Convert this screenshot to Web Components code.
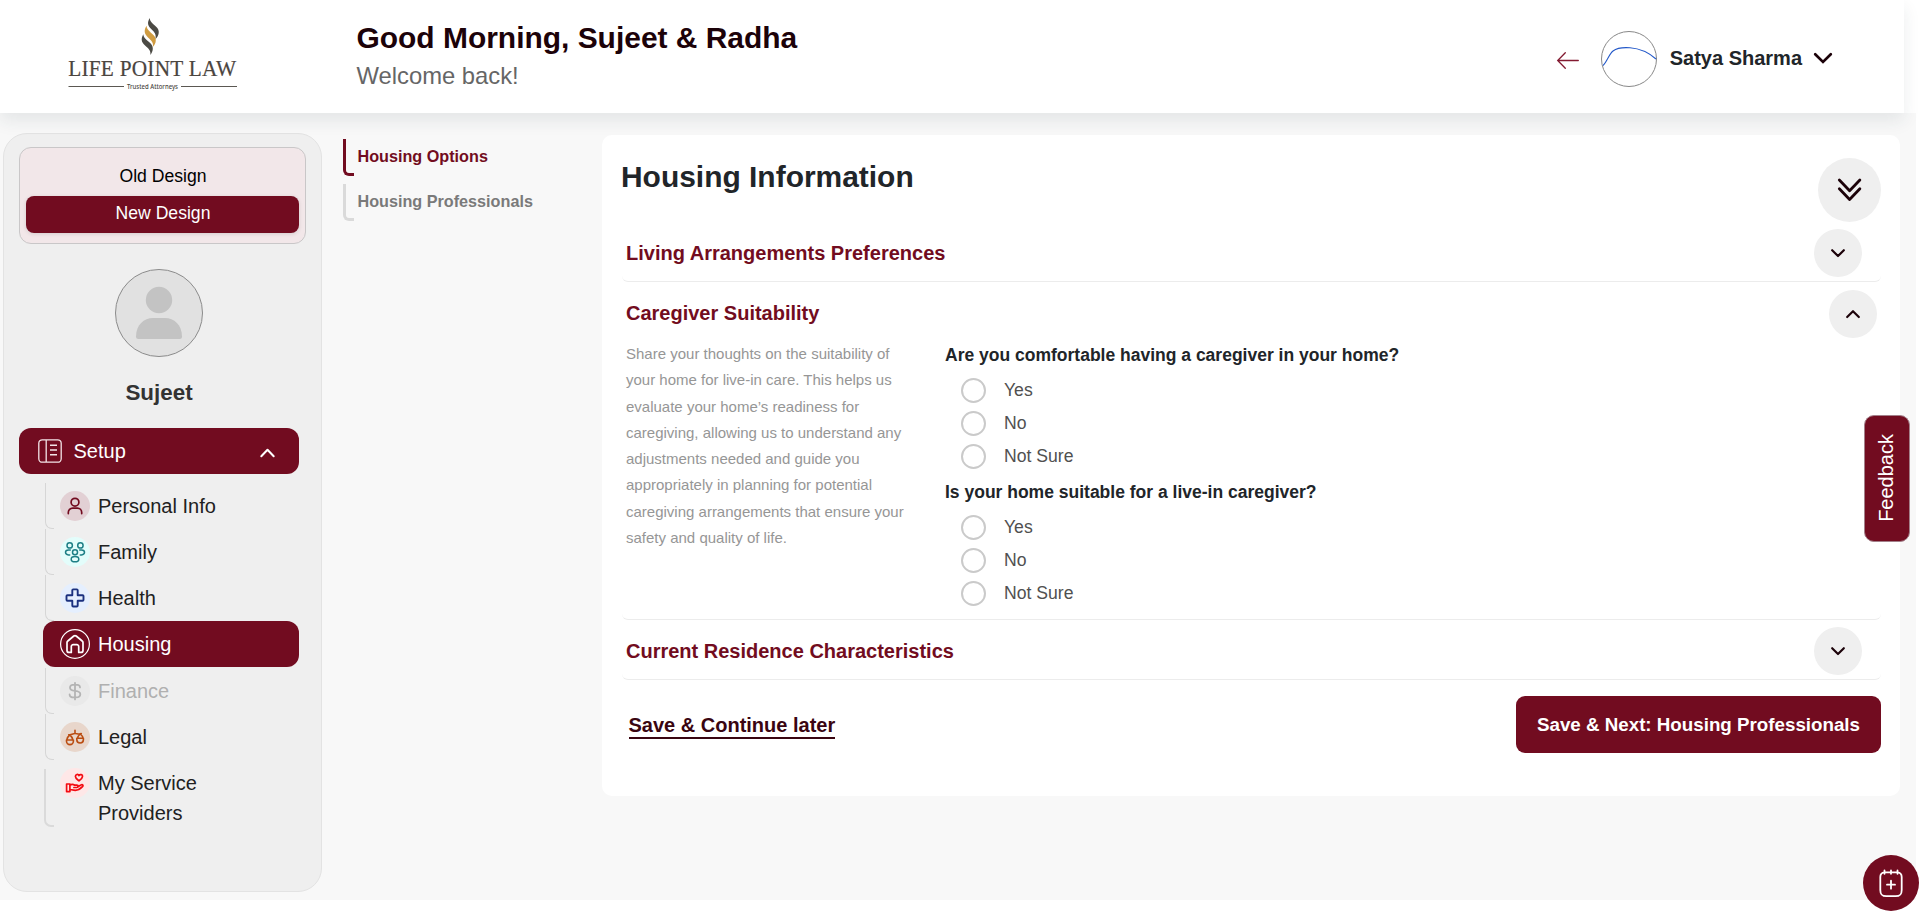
<!DOCTYPE html>
<html lang="en">
<head>
<meta charset="utf-8">
<title>Housing Information</title>
<style>
  html, body { margin: 0; background: #fff; }
  body { font-family: "Liberation Sans", Arial, sans-serif; color: #212529; height: 912px; overflow: hidden; }
</style>
</head>
<body>
<app-shell></app-shell>
<script>
const define = (name, markup) => customElements.define(name, class extends HTMLElement {
  constructor() {
    super();
    const t = document.createElement('template');
    t.innerHTML = typeof markup === 'function' ? markup(this) : markup;
    this.attachShadow({ mode: 'open' }).appendChild(t.content.cloneNode(true));
  }
});

const icons = {
  person: `<g stroke="#720c20" stroke-width="1.7"><circle cx="15" cy="11.2" r="3.9"/><path d="M8.3 22.6v-1.100a4.300 4.300 0 0 1 4.300-4.300h4.800a4.300 4.300 0 0 1 4.300 4.300v1.100"/></g>`,
  family: `<g stroke="#1d7f86" stroke-width="1.5"><circle cx="9.7" cy="8.4" r="2.7"/><circle cx="20.4" cy="8.4" r="2.7"/><circle cx="15" cy="15.2" r="2.5"/><ellipse cx="15" cy="22.2" rx="3.8" ry="2.6"/><path d="M10.300 12.900H8.500c-4 0-4 4.600 0 5h1.200M19.700 12.900h1.800c4 0 4 4.600 0 5h-1.200"/></g>`,
  health: `<path stroke="#1b317f" stroke-width="1.9" d="M12.3 7.3q0-.9.9-.9h3.6q.9 0 .9.9v4.9h4.900q.9 0 .9.9v3.700q0 .9-.9.9h-4.900v4.900q0 .9-.9.9h-3.600q-.9 0-.9-.9v-4.900H7.400q-.9 0-.9-.9v-3.700q0-.9.9-.9h4.900z"/>`,
  house: `<g stroke="#fff"><circle cx="15" cy="15" r="14.4" stroke-width="1.2"/><path stroke-width="1.7" d="M11.300 23.400H9a2 2 0 0 1-2-2v-7.800a2 2 0 0 1 .8-1.600l6-5a1.900 1.900 0 0 1 2.400 0l6 5a2 2 0 0 1 .8 1.600v7.800a2 2 0 0 1-2 2h-2.300v-5.900a1.800 1.800 0 0 0-1.800-1.800h-3.800a1.800 1.800 0 0 0-1.800 1.800z"/></g>`,
  dollar: `<path stroke="#b4b4b4" stroke-width="1.8" d="M15 6.8v16.600M20 11.400c0-1.600-1.900-2.700-4.200-2.700h-1.500c-2.400 0-4.300 1-4.300 3s1.700 2.800 5 3.200c3.500.4 5.300 1.300 5.300 3.300s-2 3.200-4.400 3.200h-1.700c-2.500 0-4.600-1-4.600-3"/>`,
  scales: `<g stroke="#ba4d12" stroke-width="1.6"><path d="M15 8.300v3.200M8.700 12.900c2.300-.1 4.300-1.400 6.300-1.400s4 1.100 6.300 0M9.800 12.900q-2.300 2-2.900 4.500M9.800 12.900q2.200 2 3 4.500M20.300 12q-2.300 1.900-2.900 4.200M20.300 12q2.300 1.900 2.800 4.200M6.500 18h6.900v1.300a3.450 3.300 0 0 1-6.900 0zM16.800 16.300h6.600v1.500a3.300 3.200 0 0 1-6.600 0z"/></g>`,
  care: `<g stroke="#f30b12" stroke-width="1.7"><path d="M19 12.800c-2-1.500-3.600-2.400-3.600-4.200 0-2.400 2.700-2.900 3.600-1 1-1.700 3.900-1.200 3.500 1-.2 1.800-1.600 2.900-3.500 4.200z"/><path d="M6.600 16h3.300v7.600H6.600zM9.900 17.200c1.700-1.200 3.500-.9 4.800 0h2.200c1.600 0 1.600 2.300 0 2.300h-3M17.800 18.700l3.200-1.800c1.600-.8 2.700.7 1.500 1.800-2.200 2.200-4.300 3.600-7.200 3.600l-5.400-.8"/></g>`
};
const chev = (w, sw, d) => `<svg width="${w}" height="${w}" viewBox="0 0 24 24" fill="none" stroke="#1c0209" stroke-width="${sw}" stroke-linecap="round" stroke-linejoin="round">${d}</svg>`;

define('brand-logo', `
<style>:host{display:block;width:210px;height:84px}svg{display:block;overflow:visible}</style>
<svg width="210" height="84" viewBox="47 12 210 84">
  <path fill="#4b4a44" d="M149.700 18c-2.700 4.500-2 7.700 1.500 11 3.500 3.200 5.300 5.500 4.200 10.300 4-4 4.600-8.800 1-12.300-3.400-3.300-6.300-4.800-6.700-9z"/>
  <path fill="#d09c41" d="M146.500 25.800c-2.800 4.600-2.200 8 1.300 11.400 3.800 3.600 6 5.600 5 9.900 3.700-4 4.100-8.600.6-12.100-3.500-3.500-6.500-5-6.900-9.200z"/>
  <path fill="#4b4a44" d="M143.300 34.200c-2.600 4.800-1.900 7.800 1.500 11 3.600 3.300 6.300 5.300 5.500 9.800 3.400-4.500 3.300-8.600.1-11.800-3.500-3.400-6.700-4.800-7.100-9z"/>
  <text transform="translate(68.200 75.900) scale(.888 1)" font-family="Liberation Serif, serif" font-size="24" fill="#4b453f" textLength="189" stroke="#4b453f" stroke-width=".2">LIFE POINT LAW</text>
  <path d="M68.500 86.500H124M181 86.500h56" stroke="#5b5852" stroke-width="1"/>
  <text x="127" y="88.500" font-family="Noto Sans, sans-serif" font-size="6.200" font-weight="500" fill="#4b4843" textLength="51" lengthAdjust="spacingAndGlyphs">Trusted Attorneys</text>
</svg>`);

define('app-header', `
<style>
:host{display:flex;position:relative;width:1904px;height:113px;box-sizing:border-box;background:#fff;box-shadow:0 8px 16px rgba(33,51,61,.09);align-items:flex-start}
brand-logo{margin:12px 0 0 47px}
.greet{margin:20px 0 0 99.500px;flex:1}
h1{margin:0;font-size:29.950px;line-height:36px;color:#1c0209}
p{margin:1px 0 0;font-size:23.800px;line-height:37px;color:#666}
.user{display:flex;align-items:center;height:56px;margin:31px 71px 0 0}
.arrow{margin-right:21px;margin-top:1px}
.name{font-size:20px;font-weight:700;line-height:24px;margin:-3px 11px 0 13px}
</style>
<brand-logo></brand-logo>
<div class="greet"><h1>Good Morning, Sujeet &amp; Radha</h1><p>Welcome back!</p></div>
<div class="user">
  <svg class="arrow" width="24" height="20" viewBox="0 0 24 20" fill="none" stroke="#831a31" stroke-width="1.300" stroke-linecap="round"><path d="M1.700 10.500H22.300M9.300 2.700L1.700 10.500l7.600 7.800"/></svg>
  <svg width="56" height="56" viewBox="0 0 56 56" fill="none"><circle cx="28" cy="28" r="27.500" stroke="#888"/><path stroke="#2459c9" stroke-width="1.100" d="M2 34.500C6 31 8 23 12 20c4-3 12-3.600 17-3.200 9 .7 19 5 26 11.200"/></svg>
  <div class="name">Satya Sharma</div>
  <svg width="20" height="14" viewBox="0 0 20 14" fill="none" stroke="#1c0209" stroke-width="2.700" stroke-linecap="round"><path d="M2.200 2.300L10 9.900l7.800-7.600"/></svg>
</div>`);

define('design-switch', `
<style>
:host{display:flex;flex-direction:column;box-sizing:border-box;width:287px;height:97px;border:1px solid #c9c7c8;border-radius:12px;background:#f2e7e9;padding:10px 6px 9px;font-size:17.600px;text-align:center;color:#000}
div{height:37px;line-height:36px;border-radius:8px;padding-left:1px}
.on{background:#720c20;color:#fff;margin-top:1px;line-height:34px;box-shadow:0 1px 4px rgba(0,0,0,.12)}
</style><div>Old Design</div><div class="on">New Design</div>`);

define('profile-badge', `
<style>:host{display:flex;flex-direction:column;align-items:center;width:280px}
div{font-size:22.400px;font-weight:700;color:#333;line-height:28px;margin-top:22px}</style>
<svg width="88" height="88" viewBox="0 0 88 88"><circle cx="44" cy="44" r="43.500" fill="#e1e1e1" stroke="#8b8b8b"/><circle cx="44" cy="31" r="13.200" fill="#c3c3c3"/><path fill="#c3c3c3" d="M21 67.500C21 56 29 49 38 49h12c9 0 17 7 17 18.500q0 2.500-2.500 2.500h-41Q21 70 21 67.500z"/></svg>
<div><slot></slot></div>`);

define('menu-head', `
<style>:host{display:flex;align-items:center;box-sizing:border-box;width:280px;height:46px;border-radius:12px;background:#720c20;color:#fff;font-size:20px;padding:0 23px 0 19px}
span{flex:1;margin-left:11.500px}.c{margin-top:4px}</style>
<svg width="24" height="24" viewBox="0 0 24 24" fill="none" stroke="#f3e4e7" stroke-width="1.300"><rect x=".8" y=".8" width="22.400" height="22.400" rx="3.500"/><path d="M8.200 1v22"/><path stroke-width="1.500" d="M12 6.300h7M12 11h7M12 15.800h7"/></svg>
<span><slot></slot></span>
<svg class="c" width="17" height="12" viewBox="0 0 17 12" fill="none" stroke="#fff" stroke-width="2" stroke-linecap="round" stroke-linejoin="round"><path d="M2.300 9.300l6.200-6.600 6.200 6.600"/></svg>`);

define('menu-item', el => `
<style>
:host{display:flex;position:relative;box-sizing:border-box;width:256px;height:46px;padding:8px 0 0 17px;font-size:20px;line-height:30px;color:#212121}
:host::before{content:"";position:absolute;left:2px;top:0;width:8px;height:45px;border:solid #d6d6d6;border-width:0 0 1.500px 1.500px;border-bottom-left-radius:7px}
:host([active]){background:#720c20;color:#fff;border-radius:12px}
:host([active])::before{display:none}
:host([disabled]){color:#b0b0b0}
:host([tall]){height:80px}
:host([tall])::before{left:1px;top:9px;height:56px;border-color:#dadada;border-width:0 0 2px 2px}
i{flex:none;width:30px;height:30px;border-radius:50%;background:${el.getAttribute('tint')}}
span{margin-left:8px;max-width:130px}
svg{display:block}
</style>
<i><svg width="30" height="30" viewBox="0 0 30 30" fill="none" stroke-linecap="round" stroke-linejoin="round">${icons[el.getAttribute('icon')]}</svg></i><span><slot></slot></span>`);

define('side-bar', `
<style>
:host{display:flex;flex-direction:column;box-sizing:border-box;width:319px;height:759px;border:1px solid #e3e3e3;border-radius:24px;background:#efefef;padding:13px 15px 0}
profile-badge{margin:25px 0 21px}
nav{display:flex;flex-direction:column;padding:9px 0 0 24px}
.late{margin-top:.7px}
</style>
<design-switch></design-switch>
<profile-badge>Sujeet</profile-badge>
<menu-head>Setup</menu-head>
<nav>
<menu-item icon="person" tint="#e2d0d4">Personal Info</menu-item>
<menu-item icon="family" tint="#e3fdfb">Family</menu-item>
<menu-item icon="health" tint="#e5effe">Health</menu-item>
<menu-item icon="house" tint="transparent" active>Housing</menu-item>
<menu-item class="late" icon="dollar" tint="#e9e9e9" disabled>Finance</menu-item>
<menu-item icon="scales" tint="#e8d6cb">Legal</menu-item>
<menu-item icon="care" tint="#fee7e7" tall>My Service Providers</menu-item>
</nav>`);

define('step-link', `
<style>:host{display:flex;height:37px;font-size:16.200px;font-weight:700;line-height:35px;color:#7a7a7a;--edge:#dadada}
:host([active]){color:#720c20;--edge:#720c20}
i{box-sizing:border-box;width:11px;border:solid var(--edge);border-width:0 0 3px 3px;border-bottom-left-radius:6px;margin-right:3.500px}</style><i></i><slot></slot>`);

define('round-toggle', el => `
<style>:host{display:flex;align-items:center;justify-content:center;width:48px;height:48px;border-radius:50%;background:#efefef;flex:none}
:host([kind=all]){width:63px;height:64px}</style>
${{ down: chev(20, 2.6, '<path d="M5 8.700l7 7 7-7"/>'), up: chev(20, 2.6, '<path d="M5 15.700l7-7 7 7"/>'),
  all: chev(32, 2.1, '<path d="M4.300 3.200L12 11.200l7.700-8M4.300 9.800L12 17.800l7.700-8"/>').replace('viewBox="0 0 24 24"', 'viewBox="0.300 -1.300 24 24"') }[el.getAttribute('kind')]}`);

define('accordion-section', el => `
<style>:host{display:block;box-sizing:border-box;border-bottom:1px solid #ececec;border-radius:0 0 6px 6px;padding:7px 19px 4px 4px;margin-left:1px}
:host([open]){padding:8px 4.500px 9px 4px}
header{display:flex;justify-content:space-between;align-items:center;font-size:20px;line-height:24px;font-weight:700;color:#720c20}
:host([open]) span{margin-top:-2px}
</style>
<header><span>${el.getAttribute('heading')}</span><round-toggle kind="${el.hasAttribute('open') ? 'up' : 'down'}"></round-toggle></header><slot></slot>`);

define('radio-option', `
<style>:host{display:flex;align-items:center;height:33px;padding-left:16px;font-size:17.600px;color:#505050}
i{box-sizing:border-box;width:25px;height:25px;border:2px solid #cacaca;border-radius:50%;margin-right:18px}
span{line-height:24px;margin-top:-2px}</style><i></i><span><slot></slot></span>`);

define('choice-question', el => `
<style>:host{display:block}div{font-size:17.500px;font-weight:700;line-height:24px;margin-bottom:7px}</style>
<div>${el.getAttribute('label')}</div><radio-option>Yes</radio-option><radio-option>No</radio-option><radio-option>Not Sure</radio-option>`);

define('housing-card', `
<style>
:host{display:block;box-sizing:border-box;width:1298px;height:661px;border-radius:10px;background:#fff;padding:23px 19px 0 19px}
.top{display:flex;justify-content:space-between;height:64px}
h2{margin:1px 0 0;font-size:29.950px;line-height:36px}
.body{display:grid;grid-template-columns:285px 1fr;column-gap:34px;padding-top:3px}
p{margin:0;font-size:15px;line-height:26.300px;color:#969696}
.q{display:flex;flex-direction:column;gap:7px;padding-top:2px}
.foot{display:flex;justify-content:space-between;align-items:flex-start;padding:16px 0 0 7.500px}
.later{font-size:20px;font-weight:700;line-height:24px;color:#3a0511;border-bottom:2px solid #3a0511;margin-top:17px}
.next{box-sizing:border-box;width:365px;height:57px;line-height:58px;border-radius:9px;background:#720c20;color:#fff;font-size:18.750px;font-weight:700;text-align:center}
</style>
<div class="top"><h2>Housing Information</h2><round-toggle kind="all"></round-toggle></div>
<accordion-section heading="Living Arrangements Preferences"></accordion-section>
<accordion-section heading="Caregiver Suitability" open>
<div class="body">
<p>Share your thoughts on the suitability of your home for live-in care. This helps us evaluate your home’s readiness for caregiving, allowing us to understand any adjustments needed and guide you appropriately in planning for potential caregiving arrangements that ensure your safety and quality of life.</p>
<div class="q">
<choice-question label="Are you comfortable having a caregiver in your home?"></choice-question>
<choice-question label="Is your home suitable for a live-in caregiver?"></choice-question>
</div></div>
</accordion-section>
<accordion-section heading="Current Residence Characteristics"></accordion-section>
<div class="foot"><span class="later">Save &amp; Continue later</span><div class="next">Save &amp; Next: Housing Professionals</div></div>`);

define('feedback-tab', `
<style>:host{position:absolute;left:1864px;top:415px;box-sizing:border-box;width:46px;height:127px;border:1px solid #a3808a;border-radius:10px;background:#720c20;color:#fff;display:flex;align-items:center;justify-content:center}
span{writing-mode:vertical-rl;transform:rotate(180deg);font-size:20px;line-height:24px;margin:0 3px 1px 0}</style><span>Feedback</span>`);

define('calendar-fab', `
<style>:host{position:absolute;left:1863px;top:855px;width:56px;height:56px;border-radius:50%;background:#720c20}svg{display:block}</style>
<svg width="56" height="56" viewBox="0 0 56 56" fill="none" stroke="#fff" stroke-width="1.800" stroke-linecap="round"><path d="M21.500 17.300c-3 .3-4.200 1.700-4.200 4.700v13c0 4.500 1.500 6.200 6 6.200h9.400c4.500 0 6-1.700 6-6.200V22c0-3-1.200-4.400-4.200-4.700M21.500 17.300h13M21.500 15.500v3.300M28 15.500v3.300M34.500 15.500v3.300M28 25.700v8M24 29.700h8"/></svg>`);

define('app-shell', `
<style>
:host{display:block;position:relative;width:1920px;height:912px;overflow:hidden}
main{display:flex;width:1916px;height:787px;background:#f8f8f8;align-items:flex-start}
side-bar{margin:20px 0 0 3px}
nav{display:flex;flex-direction:column;gap:8px;width:259px;margin:26px 0 0 21px}
housing-card{margin-top:22px}
app-header{z-index:1}
</style>
<app-header></app-header>
<main><side-bar></side-bar>
<nav><step-link active>Housing Options</step-link><step-link>Housing Professionals</step-link></nav>
<housing-card></housing-card></main>
<feedback-tab></feedback-tab><calendar-fab></calendar-fab>`);
</script>
</body>
</html>
